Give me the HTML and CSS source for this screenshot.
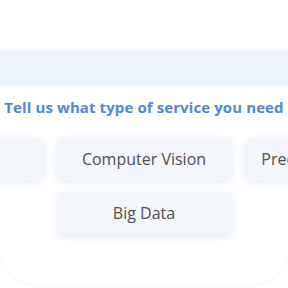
FILE: index.html
```html
<!DOCTYPE html>
<html>
<head>
  <title>Services</title>
  <link rel="stylesheet" href="styles.css">
</head>
<body>

<div class="panel">
  <div class="band"></div>
  <h2 class="title">Tell us what type of service you need</h2>
  <div class="options">
    <button class="option">NLP</button>
    <button class="option">Computer Vision</button>
    <button class="option">Predictive Analytics</button>
    <button class="option">Big Data</button>
  </div>
</div>

</body>
</html>
```

FILE: styles.css
```css
body {
  margin: 0;
  font-family: "Open Sans", Arial, sans-serif;
  background-color: #fff;
  overflow: hidden;
  width: 288px;
  height: 288px;
}

.panel {
  height: 284px;
  border-radius: 0 0 36px 36px;
  box-shadow: 0 2px 5px rgba(140, 160, 200, 0.07);
  display: flex;
  flex-direction: column;
  align-items: center;
}

.band {
  align-self: stretch;
  height: 32px;
  margin-top: 52px;
  background-color: #ecf3fc;
  box-shadow: 0 0 4px 2px #ecf3fc;
}

.title {
  margin: 13px 0 0;
  font-size: 15px;
  font-weight: 700;
  color: #4a8ad8;
  white-space: nowrap;
  letter-spacing: 0.1px;
}

.options {
  margin-top: 21px;
  width: 553px;
  flex-shrink: 0;
  display: flex;
  flex-wrap: wrap;
  justify-content: center;
  gap: 12px 14px;
}

.option {
  width: 175px;
  height: 42px;
  border: none;
  border-radius: 6px;
  background-color: #f3f6fa;
  color: #505050;
  font-family: "Open Sans", Arial, sans-serif;
  font-size: 16px;
  box-shadow: 0 2px 9px rgba(110, 150, 220, 0.2);
  white-space: nowrap;
}
```
